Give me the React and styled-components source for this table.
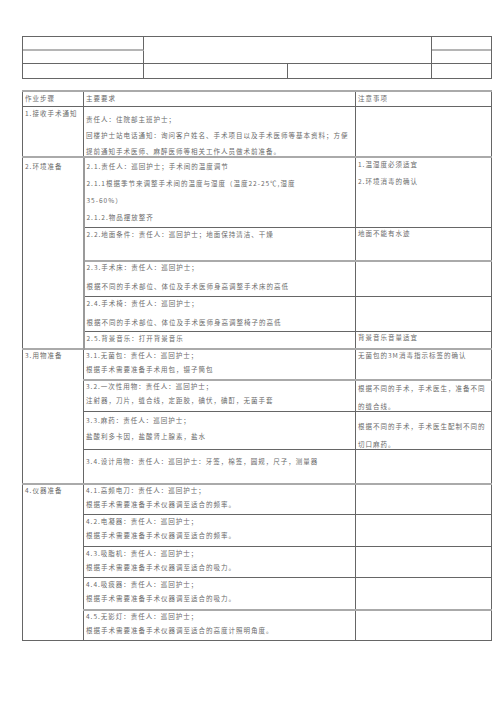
import React from "react";
import styled, { createGlobalStyle, css } from "styled-components";

const GlobalStyle = createGlobalStyle`
  * { box-sizing: border-box; }
  body {
    margin: 0;
    background: #fff;
    font-family: "Noto Sans CJK SC", "Noto Sans", sans-serif;
  }
`;

const Page = styled.div`
  width: 500px;
  height: 707px;
  padding: 36px 8px 0 22px;
  background: #fff;
`;

// empty form header on top of the sheet
const HeadBox = styled.div`
  display: grid;
  grid-template-columns: 121px 144px 144px 1fr;
  grid-template-rows: 14px 13px 14px;
  grid-template-areas:
    "a1 mid mid r1"
    "a2 mid mid r2"
    "b1 b2 b3 b4";
  width: 470px;
  border: 1px solid #666;
`;

const HeadCell = styled.div`
  grid-area: ${(p) => p.$area};
  border-right: ${(p) => (p.$last ? "none" : "1px solid #666")};
  border-bottom: ${(p) =>
    p.$split ? "2px solid #b5b5b5" : p.$bottom ? "1px solid #666" : "none"};
`;

const Table = styled.table`
  margin-top: 11px;
  width: 469px;
  border-collapse: collapse;
  table-layout: fixed;
  color: #6a6a6a;
  font-size: 6.5px;
  letter-spacing: 1px;
`;

const Row = styled.tr`
  height: ${(p) => p.$h}px;
  ${(p) =>
    p.$heavy &&
    css`
      & > td {
        border-top: 2px solid #aaa;
      }
    `}
`;

const Td = styled.td`
  border: 1px solid #666;
  vertical-align: top;
  padding: ${(p) => p.$pt || 0}px 2px 0 2px;
  line-height: 10px;
  white-space: nowrap;
  overflow: hidden;
  ${(p) => p.$soft && css`border-left: 2px solid #9a9a9a;`}

  & > div + div {
    margin-top: ${(p) => p.$gap || 0}px;
  }
`;

const Line = styled.div``;

const sections = [
  {
    step: "1.接收手术通知",
    stepPt: 1,
    rows: [
      {
        h: 51,
        pt: 7,
        gap: 6,
        lines: [
          "责任人：住院部主班护士；",
          "回楼护士站电话通知：询问客户姓名、手术项目以及手术医师等基本资料；方便",
          "提前通知手术医师、麻醉医师等相关工作人员做术前准备。",
        ],
        notes: [],
      },
    ],
  },
  {
    step: "2.环境准备",
    stepPt: 3,
    heavy: true,
    rows: [
      {
        h: 70,
        pt: 3,
        gap: 7,
        lines: [
          "2.1.责任人：巡回护士；手术间的温度调节",
          "2.1.1根据季节来调整手术间的温度与湿度（温度22-25℃,湿度",
          "35-60%）",
          "2.1.2.物品摆放整齐",
        ],
        npt: 1,
        ngap: 7,
        notes: ["1.温湿度必须适宜", "2.环境消毒的确认"],
      },
      {
        h: 34,
        pt: 1,
        npt: 0,
        lines: ["2.2.地面条件：责任人：巡回护士；地面保持清洁、干燥"],
        notes: ["地面不能有水迹"],
      },
      {
        h: 35,
        gap: 9,
        heavy: true,
        lines: [
          "2.3.手术床：责任人：巡回护士；",
          "根据不同的手术部位、体位及手术医师身高调整手术床的高低",
        ],
        notes: [],
      },
      {
        h: 35,
        pt: 1,
        gap: 9,
        lines: [
          "2.4.手术椅：责任人：巡回护士；",
          "根据不同的手术部位、体位及手术医师身高调整椅子的高低",
        ],
        notes: [],
      },
      {
        h: 18,
        pt: 1,
        npt: 0,
        lines: ["2.5.背景音乐：打开背景音乐"],
        notes: ["背景音乐音量适宜"],
      },
    ],
  },
  {
    step: "3.用物准备",
    stepPt: 0,
    heavy: true,
    rows: [
      {
        h: 31,
        gap: 4,
        lines: ["3.1.无菌包：责任人：巡回护士；", "根据手术需要准备手术用包，镊子筒包"],
        notes: ["无菌包的3M消毒指示标签的确认"],
      },
      {
        h: 30,
        gap: 4,
        heavy: true,
        lines: [
          "3.2.一次性用物：责任人：巡回护士；",
          "注射器，刀片，缝合线，定距胶，碘伏，碘酊，无菌手套",
        ],
        npt: 2,
        ngap: 8,
        notes: ["根据不同的手术，手术医生，准备不同", "的缝合线。"],
      },
      {
        h: 36,
        pt: 3,
        gap: 6,
        lines: ["3.3.麻药：责任人：巡回护士；", "盐酸利多卡因，盐酸肾上腺素，盐水"],
        npt: 9,
        ngap: 8,
        notes: ["根据不同的手术，手术医生配制不同的", "切口麻药。"],
      },
      {
        h: 34,
        pt: 6,
        lines: ["3.4.设计用物：责任人：巡回护士：牙签，棉签，圆规，尺子，测量器"],
        notes: [],
      },
    ],
  },
  {
    step: "4.仪器准备",
    stepPt: 0,
    heavy: true,
    rows: [
      ["4.1.高频电刀", "根据手术需要准备手术仪器调至适合的频率。", 31],
      ["4.2.电凝器", "根据手术需要准备手术仪器调至适合的频率。", 32],
      ["4.3.吸脂机", "根据手术需要准备手术仪器调至适合的吸力。", 31],
      ["4.4.吸痰器", "根据手术需要准备手术仪器调至适合的吸力。", 32],
      ["4.5.无影灯", "根据手术需要准备手术仪器调至适合的高度计照明角度。", 31],
    ].map(([t, d, h], i) => ({
      h,
      pt: i === 0 || i === 4 ? 0 : 1,
      gap: 4,
      heavy: i === 4,
      lines: [`${t}：责任人：巡回护士；`, d],
      notes: [],
    })),
  },
];

export default function App() {
  return (
    <>
      <GlobalStyle />
      <Page>
        <HeadBox>
          <HeadCell $area="a1" $split />
          <HeadCell $area="a2" $bottom />
          <HeadCell $area="mid" $bottom />
          <HeadCell $area="r1" $split $last />
          <HeadCell $area="r2" $bottom $last />
          <HeadCell $area="b1" />
          <HeadCell $area="b2" />
          <HeadCell $area="b3" />
          <HeadCell $area="b4" $last />
        </HeadBox>

        <Table>
          <colgroup>
            <col style={{ width: 61 }} />
            <col style={{ width: 272 }} />
            <col style={{ width: 136 }} />
          </colgroup>
          <tbody>
            <Row $h={15} $heavy>
              <Td $pt={1}>作业步骤</Td>
              <Td $pt={1}>主要要求</Td>
              <Td $pt={1}>注意事项</Td>
            </Row>
            {sections.map((s) =>
              s.rows.map((r, i) => (
                <Row key={s.step + i} $h={r.h} $heavy={i === 0 ? s.heavy : r.heavy}>
                  {i === 0 && (
                    <Td rowSpan={s.rows.length} $pt={s.stepPt}>
                      <Line>{s.step}</Line>
                    </Td>
                  )}
                  <Td $pt={r.pt} $gap={r.gap} $soft={s.step.startsWith("2")}>
                    {r.lines.map((l) => (
                      <Line key={l}>{l}</Line>
                    ))}
                  </Td>
                  <Td $pt={r.npt ?? r.pt} $gap={r.ngap}>
                    {r.notes.map((n) => (
                      <Line key={n}>{n}</Line>
                    ))}
                  </Td>
                </Row>
              ))
            )}
          </tbody>
        </Table>
      </Page>
    </>
  );
}
